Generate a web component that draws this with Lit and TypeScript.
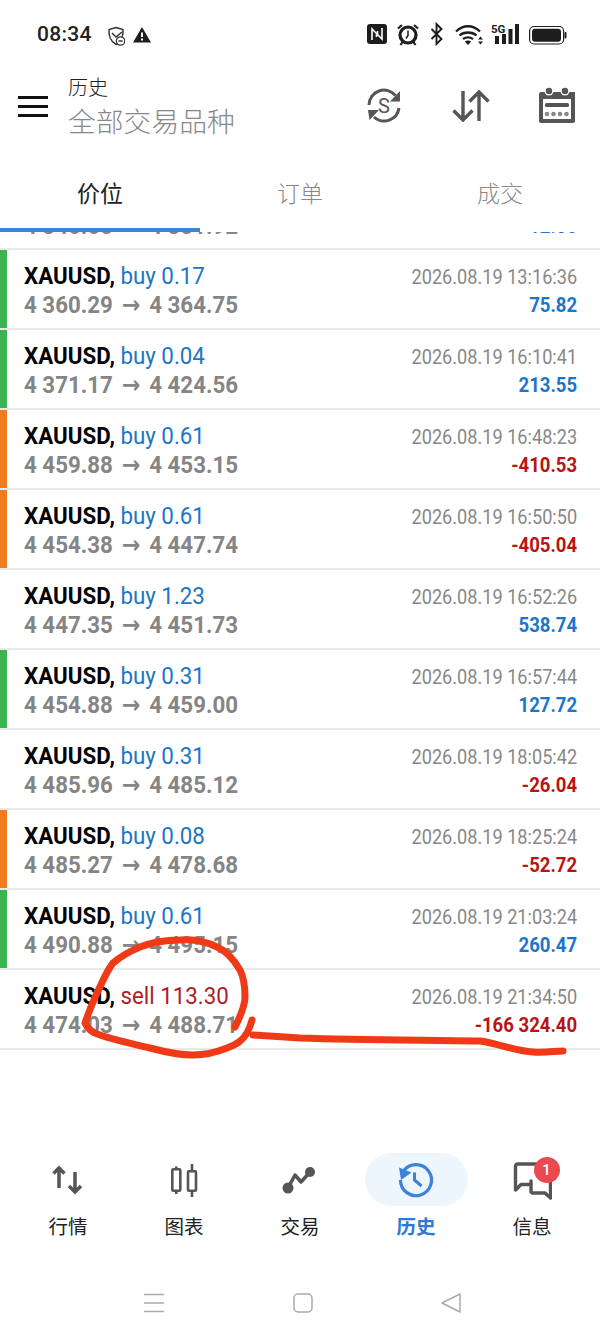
import { LitElement, css, html, svg } from "lit";
import { customElement } from "lit/decorators.js";

type Deal = {
  side: string;
  vol: string;
  open: string;
  close: string;
  time: string;
  profit: string;
  mark?: "green" | "orange";
};

const DEALS: Deal[] = [
  { side: "buy", vol: "0.17", open: "4 360.29", close: "4 364.75", time: "2026.08.19 13:16:36", profit: "75.82", mark: "green" },
  { side: "buy", vol: "0.04", open: "4 371.17", close: "4 424.56", time: "2026.08.19 16:10:41", profit: "213.55", mark: "green" },
  { side: "buy", vol: "0.61", open: "4 459.88", close: "4 453.15", time: "2026.08.19 16:48:23", profit: "-410.53", mark: "orange" },
  { side: "buy", vol: "0.61", open: "4 454.38", close: "4 447.74", time: "2026.08.19 16:50:50", profit: "-405.04", mark: "orange" },
  { side: "buy", vol: "1.23", open: "4 447.35", close: "4 451.73", time: "2026.08.19 16:52:26", profit: "538.74" },
  { side: "buy", vol: "0.31", open: "4 454.88", close: "4 459.00", time: "2026.08.19 16:57:44", profit: "127.72", mark: "green" },
  { side: "buy", vol: "0.31", open: "4 485.96", close: "4 485.12", time: "2026.08.19 18:05:42", profit: "-26.04" },
  { side: "buy", vol: "0.08", open: "4 485.27", close: "4 478.68", time: "2026.08.19 18:25:24", profit: "-52.72", mark: "orange" },
  { side: "buy", vol: "0.61", open: "4 490.88", close: "4 495.15", time: "2026.08.19 21:03:24", profit: "260.47", mark: "green" },
  { side: "sell", vol: "113.30", open: "4 474.03", close: "4 488.71", time: "2026.08.19 21:34:50", profit: "-166 324.40" },
];

const NAV = [
  {
    label: "行情",
    icon: svg`<path d="M11 28V9M5.500 13.500L11 8L16.500 13.500M27 12V31M21 26L27 32L33 26" fill="none" stroke="#555" stroke-width="3.500"/>`,
  },
  {
    label: "图表",
    icon: svg`<g fill="none" stroke="#555" stroke-width="2.600"><rect x="8.300" y="9.300" width="8" height="21.500" rx="1"/><rect x="24" y="11.300" width="8" height="19.500" rx="1"/></g>
      <path d="M12.300 6.500V9M12.300 31V34M28 4V11M28 31V37" stroke="#555" stroke-width="2.600"/>`,
  },
  {
    label: "交易",
    icon: svg`<path d="M8 28L15 15L21 22L30 12" fill="none" stroke="#555" stroke-width="3.500" stroke-linejoin="round"/>
      <circle cx="8" cy="28" r="5.500" fill="#555"/><circle cx="30" cy="12" r="5" fill="#555"/>`,
  },
  {
    label: "历史",
    active: true,
    icon: svg`<g fill="none" stroke="#3b82dc" stroke-width="3.200"><path d="M7.500 11A15.500 15.500 0 1 1 4.500 20"/><path d="M18.500 12.500V20L25.500 26" stroke-width="3"/></g>
      <path d="M3 7.500L15.500 12.500L5 20Z" fill="#3b82dc"/>`,
  },
  {
    label: "信息",
    icon: svg`<g fill="none" stroke="#555" stroke-width="3.400" stroke-linejoin="round" stroke-linecap="round"><path d="M28 4H5.500a2 2 0 0 0-2 2V30L9 24.500H17"/><path d="M19 21V31a2 2 0 0 0 2 2H33L38.500 38V16"/></g>`,
  },
];

@customElement("app-root")
export class AppRoot extends LitElement {
  static styles = css`
    :host {
      display: block;
      position: relative;
      width: 600px;
      height: 1340px;
      overflow: hidden;
      background: #fff;
      font-family: Roboto, "Noto Sans CJK SC", sans-serif;
      color: #111;
    }
    .status {
      height: 68px;
      box-sizing: border-box;
      padding: 22px 30px 0 37px;
      display: flex;
      align-items: flex-start;
    }
    .clock {
      font: 500 21px/24px Roboto, sans-serif;
      letter-spacing: 0.3px;
      color: #222;
      margin-right: 15px;
    }
    .status svg {
      display: block;
      flex: none;
    }
    .status .gap {
      flex: 1;
    }
    .bar {
      height: 76px;
      display: flex;
      align-items: center;
      box-sizing: border-box;
      padding-left: 18px;
      margin-bottom: 16px;
    }
    .burger {
      width: 30px;
      display: flex;
      flex-direction: column;
      gap: 6px;
      margin: 0 20px 0 0;
    }
    .burger i {
      display: block;
      height: 3px;
      background: #111;
    }
    .titles {
      width: 298px;
      font-family: "Noto Sans CJK SC", sans-serif;
      font-weight: 300;
      margin-top: 2px;
    }
    .t1 {
      font-size: 20px;
      line-height: 26px;
      color: #222;
    }
    .t2 {
      font-size: 27.8px;
      line-height: 40px;
      color: #888;
    }
    .actions {
      display: flex;
      gap: 50px;
      align-items: center;
    }
    .actions svg {
      display: block;
    }
    .tabs {
      height: 72px;
      display: grid;
      grid-template-columns: repeat(3, 200px);
      font: 300 23px/64px "Noto Sans CJK SC", sans-serif;
      text-align: center;
      color: #888;
    }
    .tabs .on {
      color: #222;
      border-bottom: 4px solid #3f83d8;
      height: 72px;
      box-sizing: border-box;
      font-weight: 400;
    }
    /* only the foot of the scrolled-away row still shows under the tabs */
    .cut {
      height: 18px;
      box-sizing: border-box;
      overflow: hidden;
      border-bottom: 2px solid #e9e9e9;
      display: flex;
      justify-content: space-between;
      padding: 0 23px 0 24px;
    }
    .cut .line {
      margin-top: -20px;
    }
    .row {
      height: 80px;
      box-sizing: border-box;
      border-bottom: 2px solid #e9e9e9;
      display: flex;
    }
    .mark {
      width: 7px;
      flex: none;
    }
    .green {
      background: #3cb550;
    }
    .orange {
      background: #f07d22;
    }
    .body {
      flex: 1;
      min-width: 0;
      display: flex;
      justify-content: space-between;
      padding: 12px 23px 0 17px;
    }
    .line {
      height: 28.500px;
      font-size: 24px;
      line-height: 28px;
      white-space: nowrap;
      transform: scaleX(0.93);
      transform-origin: 0 50%;
    }
    .right {
      padding-top: 1px;
    }
    .right .line,
    .cut .profit {
      height: 28px;
      transform: scaleX(0.885);
      transform-origin: 100% 50%;
      text-align: right;
      font-size: 20.500px;
    }
    .right .profit,
    .cut .profit {
      transform: scaleX(0.905);
    }
    .sym {
      font-weight: 700;
      color: #050505;
    }
    .buy {
      color: #2176c4;
    }
    .sell {
      color: #ae1c2a;
    }
    .prices {
      font-weight: 700;
      color: #858585;
    }
    .arrow {
      font: 700 24px/28px "DejaVu Sans", sans-serif;
      margin: 0 3.500px;
    }
    .time {
      color: #888;
    }
    .profit {
      font-weight: 700;
    }
    .pos {
      color: #1b75c9;
    }
    .neg {
      color: #b81414;
    }
    .spacer {
      height: 103px;
    }
    .nav {
      display: grid;
      grid-template-columns: repeat(5, 116px);
      padding-left: 10px;
      height: 97px;
    }
    .tab {
      display: flex;
      flex-direction: column;
      align-items: center;
      font: 400 19.500px/28px "Noto Sans CJK SC", sans-serif;
      color: #222;
    }
    .pill {
      position: relative;
      width: 103px;
      height: 53px;
      border-radius: 27px;
      display: flex;
      align-items: center;
      justify-content: center;
      margin-bottom: 6px;
    }
    .tab.active .pill {
      background: #eef6fd;
    }
    .tab.active {
      color: #2f7ad2;
      font-weight: 700;
    }
    .badge {
      position: absolute;
      left: 53px;
      top: 4px;
      width: 26px;
      height: 26px;
      border-radius: 50%;
      background: #e84a4f;
      color: #fff;
      font: 500 15px/26px Roboto, sans-serif;
      text-align: center;
    }
    .keys {
      height: 90px;
      display: grid;
      grid-template-columns: 144px 20px 129px 20px 128px 20px;
      align-items: center;
      padding-top: 16px;
      box-sizing: border-box;
    }
    .keys svg {
      display: block;
    }
    .ink {
      position: absolute;
      left: 0;
      top: 0;
      pointer-events: none;
    }
  `;

  private statusIcons() {
    return html`
      <svg width="18" height="20" viewBox="0 0 18 20" style="margin-top:4px">
        <path d="M9 1.500L16 3.500C16.500 9 14.500 15.500 9 18.500C3.500 15.500 1.500 9 2 3.500Z" fill="none" stroke="#333" stroke-width="1.500"/>
        <path d="M5 7L9 11L15 6" fill="none" stroke="#333" stroke-width="1.500"/>
        <circle cx="13.500" cy="15" r="4.200" fill="#fff" stroke="#333" stroke-width="1.200"/>
        <path d="M11.500 15H15.500" stroke="#333" stroke-width="1.500"/>
      </svg>
      <svg width="18" height="16" viewBox="0 0 18 16" style="margin:5px 0 0 8px">
        <path d="M9 0L18 15.500H0Z" fill="#1d1d1d"/>
        <path d="M9 5.500V10M9 11.500V13.500" stroke="#fff" stroke-width="2"/>
      </svg>
      <div class="gap"></div>
      <svg width="210" height="26" viewBox="360 22 210 26">
        <rect x="367" y="24" width="20" height="20" rx="3" fill="#1d1d1d"/>
        <path d="M372 40V29L376.500 33.500V37M382 28V39L377.500 34.500V31" fill="none" stroke="#fff" stroke-width="1.600"/>
        <circle cx="408" cy="35" r="8" fill="none" stroke="#1d1d1d" stroke-width="3.200"/>
        <path d="M408 30.500V35.500L406 38.500" fill="none" stroke="#1d1d1d" stroke-width="1.500"/>
        <path d="M398 28.500L402 25M418 28.500L414 25M402.500 42L400.500 45M413.500 42L415.500 45" stroke="#1d1d1d" stroke-width="2.200"/>
        <path d="M431.500 29L441.500 39L436.500 44V24L441.500 29L431.500 39" fill="none" stroke="#1d1d1d" stroke-width="1.900"/>
        <path d="M456 31.500C463 24.500 473 24.500 480 31.500M459.500 35.500C464 31.500 472 31.500 476.500 35.500M463 39C466 37 470 37 473 39" fill="none" stroke="#1d1d1d" stroke-width="2.300"/>
        <path d="M468 45L464.800 41.500C466.500 40 469.500 40 471.200 41.500Z" fill="#1d1d1d"/>
        <path d="M480.500 36.500L483 39.500H478ZM478 41.500H483L480.500 44.500Z" fill="#1d1d1d"/>
        <text x="491" y="33" font-family="Roboto, sans-serif" font-weight="700" font-size="11.500" fill="#1d1d1d">5G</text>
        <path d="M495 36h4v8h-4zM502 34h4v10h-4zM508.500 29h4v15h-4zM515 24h4v20h-4z" fill="#1d1d1d"/>
        <rect x="529.600" y="26.500" width="34" height="17.500" rx="4.500" fill="none" stroke="#1d1d1d" stroke-width="1.200"/>
        <rect x="532" y="28.800" width="29" height="13" rx="3" fill="#1d1d1d"/>
        <rect x="564.500" y="32" width="2" height="6.500" rx="1" fill="#1d1d1d"/>
      </svg>
    `;
  }

  private actions() {
    return html`
      <div class="actions">
        <svg width="36" height="36" viewBox="0 0 36 36">
          <g fill="none" stroke="#555" stroke-width="3">
            <path d="M3 17A15 15 0 0 1 29.500 7.500"/>
            <path d="M33 20A15 15 0 0 1 8 29"/>
          </g>
          <path d="M34 3V13.500H24ZM2 22H13L3.500 32Z" fill="#555"/>
          <text x="18" y="25" text-anchor="middle" font-family="Roboto, sans-serif" font-size="20" fill="#555">S</text>
        </svg>
        <svg width="38" height="32" viewBox="0 0 38 32">
          <path d="M11 1V30M1.500 20.500L11 30L20.500 20.500M27 31V2M17.500 11.500L27 2L36.500 11.500" fill="none" stroke="#555" stroke-width="3.400"/>
        </svg>
        <svg width="38" height="38" viewBox="0 0 38 38" style="margin-left:-2px">
          <path d="M2 5H37V34a2 2 0 0 1-2 2H3a2 2 0 0 1-2-2V7a2 2 0 0 1 2-2Z" fill="#555"/>
          <circle cx="11" cy="4" r="4.500" fill="#fff"/><circle cx="27" cy="4" r="4.500" fill="#fff"/>
          <circle cx="11" cy="4" r="3.200" fill="#555"/><circle cx="27" cy="4" r="3.200" fill="#555"/>
          <rect x="5" y="12" width="28" height="20" fill="#fff"/>
          <rect x="7" y="16" width="24" height="4" rx="1.500" fill="#555"/>
          <circle cx="9" cy="27" r="2.300" fill="#888"/><circle cx="15.500" cy="27" r="2.300" fill="#888"/><circle cx="22" cy="27" r="2.300" fill="#888"/><circle cx="28.500" cy="27" r="2.300" fill="#888"/>
        </svg>
      </div>
    `;
  }

  private row(d: Deal) {
    return html`
      <div class="row">
        <div class="mark ${d.mark ?? ""}"></div>
        <div class="body">
          <div class="left">
            <div class="line"><span class="sym">XAUUSD,</span> <span class=${d.side}>${d.side} ${d.vol}</span></div>
            <div class="line prices">${d.open} <span class="arrow">→</span> ${d.close}</div>
          </div>
          <div class="right">
            <div class="line time">${d.time}</div>
            <div class="line profit ${d.profit.startsWith("-") ? "neg" : "pos"}">${d.profit}</div>
          </div>
        </div>
      </div>
    `;
  }

  render() {
    return html`
      <div class="status">
        <div class="clock">08:34</div>
        ${this.statusIcons()}
      </div>
      <div class="bar">
        <div class="burger"><i></i><i></i><i></i></div>
        <div class="titles">
          <div class="t1">历史</div>
          <div class="t2">全部交易品种</div>
        </div>
        ${this.actions()}
      </div>
      <div class="tabs">
        <div class="on">价位</div>
        <div>订单</div>
        <div>成交</div>
      </div>
      <div class="cut">
        <div class="line prices">4 346.65 <span class="arrow">→</span> 4 351.92</div>
        <div class="line profit pos">12.06</div>
      </div>
      ${DEALS.map((d) => this.row(d))}
      <div class="spacer"></div>
      <div class="nav">
        ${NAV.map(
          (n) => html`
            <div class="tab ${n.active ? "active" : ""}">
              <div class="pill">
                <svg width="40" height="40" viewBox="0 0 40 40">${n.icon}</svg>
                ${n.label === "信息" ? html`<div class="badge">1</div>` : ""}
              </div>
              ${n.label}
            </div>
          `,
        )}
      </div>
      <div class="keys">
        <div></div>
        <svg width="20" height="20" viewBox="0 0 20 20"><path d="M0 1.500H20M0 10H20M0 18.500H20" stroke="#aaa" stroke-width="1.500"/></svg>
        <div></div>
        <svg width="20" height="20" viewBox="0 0 20 20"><rect x="1" y="1" width="18" height="18" rx="4" fill="none" stroke="#aaa" stroke-width="1.500"/></svg>
        <div></div>
        <svg width="20" height="20" viewBox="0 0 20 20"><path d="M1 10L19 1V19Z" fill="none" stroke="#aaa" stroke-width="1.500" stroke-linejoin="round"/></svg>
      </div>
      <svg class="ink" width="600" height="1340" viewBox="0 0 600 1340" fill="none" stroke="#f03a17" stroke-width="7" stroke-linecap="round" stroke-linejoin="round">
        <path d="M235 1027C241 1015 245 1006 245 997C245 985 244 978 240 970C233 958 226 951 217 947C205 941 192 939 180 940C165 940 150 943 140 947C128 952 120 957 113 963C106 972 102 983 97 993C92 1004 88 1014 85 1023C88 1030 93 1033 100 1035C115 1040 133 1044 150 1048C165 1052 180 1055 193 1055C207 1055 217 1052 227 1048C236 1045 243 1040 247 1033C249 1029 251 1024 252 1020"/>
        <path d="M253 1035C270 1036 285 1037 300 1038C360 1040 420 1040 480 1041C500 1044 516 1051 533 1052C545 1053 555 1051 563 1051"/>
      </svg>
    `;
  }
}
